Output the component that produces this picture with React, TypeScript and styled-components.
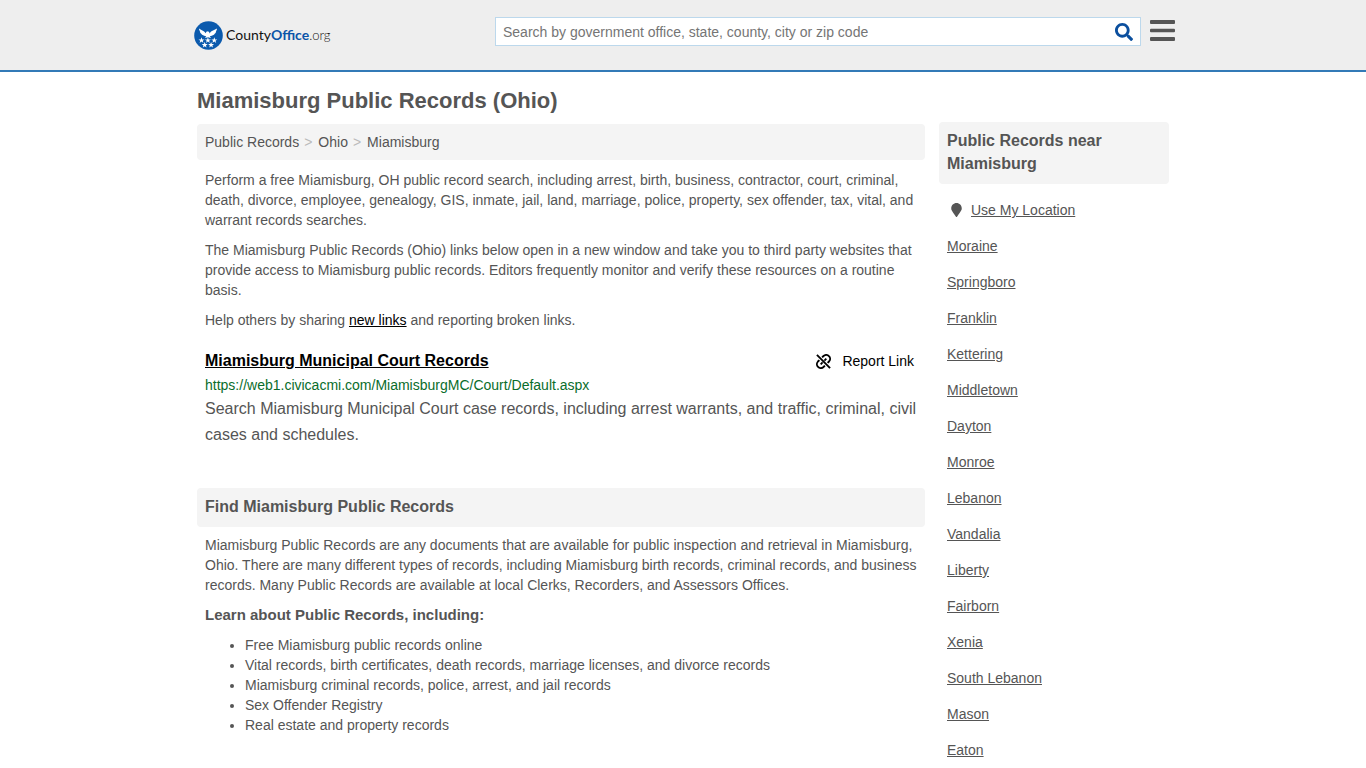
import React from "react";
import styled, { createGlobalStyle } from "styled-components";

const GlobalStyle = createGlobalStyle`
  *, *::before, *::after { box-sizing: border-box; }
  body {
    margin: 0;
    background: #fff;
    color: #555;
    font-family: "Liberation Sans", Arial, Helvetica, sans-serif;
    font-size: 14px;
    line-height: 20px;
  }
  a { color: inherit; }
  h1, h2, h3, p, ul { margin: 0; padding: 0; }
`;

const Header = styled.header`
  background: #eee;
  border-bottom: 2px solid #337ab7;
`;

const HeaderInner = styled.div`
  max-width: 984px;
  min-height: 70px;
  margin: 0 auto;
  padding-left: 3px;
  display: flex;
  align-items: center;
`;

const Logo = styled.a`
  display: flex;
  align-items: center;
  gap: 3px;
  color: #111;
  font: 14px/20px Lato, sans-serif;
  text-decoration: none;
  strong { color: #0b55a8; font-weight: 700; }
  small { font-size: 13px; font-weight: 300; }
`;

const SearchForm = styled.form`
  display: flex;
  align-items: center;
  flex: 0 1 646px;
  height: 29px;
  margin: 0 9px 8px auto;
  padding: 2px 7px 0;
  background: #fff;
  border: 1px solid #bcd8ec;
`;

const SearchInput = styled.input`
  flex: 1;
  min-width: 0;
  padding: 0;
  border: 0;
  outline: 0;
  background: transparent;
  color: #555;
  font: inherit;
  &::placeholder { color: #757575; opacity: 1; }
`;

const IconButton = styled.button`
  display: flex;
  padding: 0;
  border: 0;
  background: none;
  color: #0b4f9e;
  cursor: pointer;
`;

const MenuButton = styled(IconButton)`
  margin-bottom: 10px;
  color: #555;
`;

const Page = styled.div`
  max-width: 972px;
  margin: 0 auto;
  padding-top: 16px;
`;

const Title = styled.h1`
  margin-bottom: 11px;
  font-size: 22px;
  line-height: 25px;
`;

const Columns = styled.div`
  display: flex;
  align-items: flex-start;
  gap: 14px;
`;

const Main = styled.main`
  flex: 1;
  min-width: 0;
`;

const Crumbs = styled.nav`
  display: flex;
  gap: 5px;
  padding: 8px;
  border-radius: 4px;
  background: #f4f4f4;
  color: #bbb;
  a { color: #555; text-decoration: none; }
  span { padding-right: 1px; }
`;

const Body = styled.section<{ $top: number }>`
  display: flex;
  flex-direction: column;
  gap: 10px;
  padding: ${({ $top }) => $top}px 8px 0;
`;

const NewLink = styled.a`
  color: #000;
`;

const Record = styled.article`
  padding: 20px 8px 40px;
`;

const RecordHead = styled.div`
  display: flex;
  justify-content: space-between;
  padding-right: 3px;
`;

const RecordTitle = styled.h3`
  color: #000;
  font-size: 16px;
  line-height: 22px;
`;

const ReportButton = styled.button`
  display: flex;
  align-items: center;
  gap: 11px;
  padding: 0;
  border: 0;
  background: none;
  color: #000;
  font: inherit;
  cursor: pointer;
`;

const RecordUrl = styled.p`
  padding: 3px 0 1px;
  color: #0a6d2b;
`;

const RecordText = styled.p`
  font-size: 16px;
  line-height: 26px;
`;

const SectionTitle = styled.h2`
  padding: 7px 8px 9px;
  border-radius: 4px;
  background: #f4f4f4;
  font-size: 16px;
  line-height: 23px;
`;

const ListTitle = styled.h3`
  font-size: 15px;
  line-height: 20px;
`;

const Bullets = styled.ul`
  padding-left: 40px;
`;

const Aside = styled.aside`
  flex: 0 0 230px;
  margin-top: -2px;
`;

const Nearby = styled.ul`
  display: flex;
  flex-direction: column;
  gap: 16px;
  padding: 16px 8px 0;
  list-style: none;
`;

const LocationItem = styled.li`
  display: flex;
  align-items: center;
  gap: 9px;
  padding-left: 4px;
`;

const places = [
  "Moraine", "Springboro", "Franklin", "Kettering", "Middletown", "Dayton", "Monroe", "Lebanon",
  "Vandalia", "Liberty", "Fairborn", "Xenia", "South Lebanon", "Mason", "Eaton",
];

const topics = [
  "Free Miamisburg public records online",
  "Vital records, birth certificates, death records, marriage licenses, and divorce records",
  "Miamisburg criminal records, police, arrest, and jail records",
  "Sex Offender Registry",
  "Real estate and property records",
];

const starPath = "M0-3 .8-.9 3-.9 1.200.5 1.900 2.600 0 1.300-1.900 2.600-1.200.5-3-.9-.8-.9Z";

const Emblem = () => (
  <svg width="29" height="29" viewBox="0 0 29 29" aria-hidden="true">
    <circle cx="14.5" cy="14.5" r="14.3" fill="#0b5aad" />
    <g fill="#fff">
      <path d="M5 7.600C7 9.400 9.800 9.600 11.800 12.200L12.300 10.700 14 10.300 15.300 11.200 15.400 12.400C17.400 9.600 20.500 9.400 23 7.600C22.900 9 22.400 10 21.800 10.700L22.200 10.800C21.700 12 20.900 12.700 20.300 13L20.500 13.300C19.200 14.500 17.400 14.900 15.800 15.200L17 17 14 16.300 11 17 12.200 15.200C10.600 14.900 8.800 14.500 7.500 13.300L7.700 13C7.100 12.700 6.300 12 5.800 10.800L6.200 10.700C5.600 10 5.100 9 5 7.600Z" />
      {[[7.5, 19.3], [13.9, 19.3], [20.3, 19.3], [10.7, 24], [17.1, 24]].map(([x, y]) => (
        <path key={`${x}-${y}`} d={starPath} transform={`translate(${x} ${y})`} />
      ))}
    </g>
  </svg>
);

const SearchIcon = () => (
  <svg width="18" height="18" viewBox="0 0 512 512" fill="currentColor" aria-hidden="true">
    <path d="M505 442.7L405.300 343c-4.500-4.500-10.600-7-17-7H372c27.600-35.300 44-79.700 44-128C416 93.100 322.900 0 208 0S0 93.100 0 208s93.100 208 208 208c48.300 0 92.700-16.400 128-44v16.300c0 6.400 2.500 12.500 7 17l99.700 99.700c9.400 9.400 24.600 9.400 33.900 0l28.300-28.300c9.400-9.400 9.400-24.600.1-34zM208 336c-70.700 0-128-57.200-128-128 0-70.700 57.200-128 128-128 70.700 0 128 57.200 128 128 0 70.700-57.200 128-128 128z" />
  </svg>
);

const MenuIcon = () => (
  <svg width="25" height="21" viewBox="0 0 25 21" fill="currentColor" aria-hidden="true">
    <rect width="25" height="4" rx="1" />
    <rect y="8.700" width="25" height="3.600" rx="1" />
    <rect y="17" width="25" height="4" rx="1" />
  </svg>
);

const UnlinkIcon = () => (
  <svg width="15" height="15" viewBox="0 0 16 16" fill="none" stroke="currentColor" strokeWidth="2" aria-hidden="true">
    <path d="M1 1 15 15" />
    <path d="M6.500 3.600 8 2.100C9.800.5 12.400.7 13.800 2.200 15.300 3.600 15.500 6.200 13.900 8L12.400 9.500" />
    <path d="M9.500 12.400 8 13.900C6.200 15.500 3.600 15.300 2.200 13.800.7 12.400.5 9.800 2.100 8L3.600 6.500" />
    <path d="M9 7 11 5M5 11 7 9" />
  </svg>
);

const PinIcon = () => (
  <svg width="11" height="14" viewBox="0 0 384 512" fill="currentColor" aria-hidden="true">
    <path d="M172.300 501.700C27 291 0 269.400 0 192 0 86 86 0 192 0s192 86 192 192c0 77.400-27 99-172.300 309.700-9.500 13.800-29.900 13.800-39.400 0z" />
  </svg>
);

export default function App() {
  return (
    <>
      <GlobalStyle />
      <Header>
        <HeaderInner>
          <Logo href="#" aria-label="CountyOffice.org">
            <Emblem />
            <span>County<strong>Office</strong><small>.org</small></span>
          </Logo>
          <SearchForm onSubmit={(e) => e.preventDefault()}>
            <SearchInput
              type="text"
              aria-label="Search"
              placeholder="Search by government office, state, county, city or zip code"
            />
            <IconButton type="submit" aria-label="Submit search"><SearchIcon /></IconButton>
          </SearchForm>
          <MenuButton type="button" aria-label="Menu"><MenuIcon /></MenuButton>
        </HeaderInner>
      </Header>
      <Page>
        <Title>Miamisburg Public Records (Ohio)</Title>
        <Columns>
          <Main>
            <Crumbs aria-label="Breadcrumb">
              <a href="#">Public Records</a>
              <span>&gt;</span>
              <a href="#">Ohio</a>
              <span>&gt;</span>
              <a href="#">Miamisburg</a>
            </Crumbs>
            <Body $top={10}>
              <p>
                Perform a free Miamisburg, OH public record search, including arrest, birth, business, contractor,
                court, criminal, death, divorce, employee, genealogy, GIS, inmate, jail, land, marriage, police,
                property, sex offender, tax, vital, and warrant records searches.
              </p>
              <p>
                The Miamisburg Public Records (Ohio) links below open in a new window and take you to third party
                websites that provide access to Miamisburg public records. Editors frequently monitor and verify
                these resources on a routine basis.
              </p>
              <p>
                Help others by sharing <NewLink href="#">new links</NewLink> and reporting broken links.
              </p>
            </Body>
            <Record>
              <RecordHead>
                <RecordTitle><a href="#">Miamisburg Municipal Court Records</a></RecordTitle>
                <ReportButton type="button"><UnlinkIcon />Report Link</ReportButton>
              </RecordHead>
              <RecordUrl>https://web1.civicacmi.com/MiamisburgMC/Court/Default.aspx</RecordUrl>
              <RecordText>
                Search Miamisburg Municipal Court case records, including arrest warrants, and traffic, criminal,
                civil cases and schedules.
              </RecordText>
            </Record>
            <SectionTitle>Find Miamisburg Public Records</SectionTitle>
            <Body $top={8}>
              <p>
                Miamisburg Public Records are any documents that are available for public inspection and retrieval
                in Miamisburg, Ohio. There are many different types of records, including Miamisburg birth records,
                criminal records, and business records. Many Public Records are available at local Clerks,
                Recorders, and Assessors Offices.
              </p>
              <ListTitle>Learn about Public Records, including:</ListTitle>
              <Bullets>
                {topics.map((topic) => <li key={topic}>{topic}</li>)}
              </Bullets>
            </Body>
          </Main>
          <Aside>
            <SectionTitle>Public Records near Miamisburg</SectionTitle>
            <Nearby>
              <LocationItem><PinIcon /><a href="#">Use My Location</a></LocationItem>
              {places.map((place) => <li key={place}><a href="#">{place}</a></li>)}
            </Nearby>
          </Aside>
        </Columns>
      </Page>
    </>
  );
}
